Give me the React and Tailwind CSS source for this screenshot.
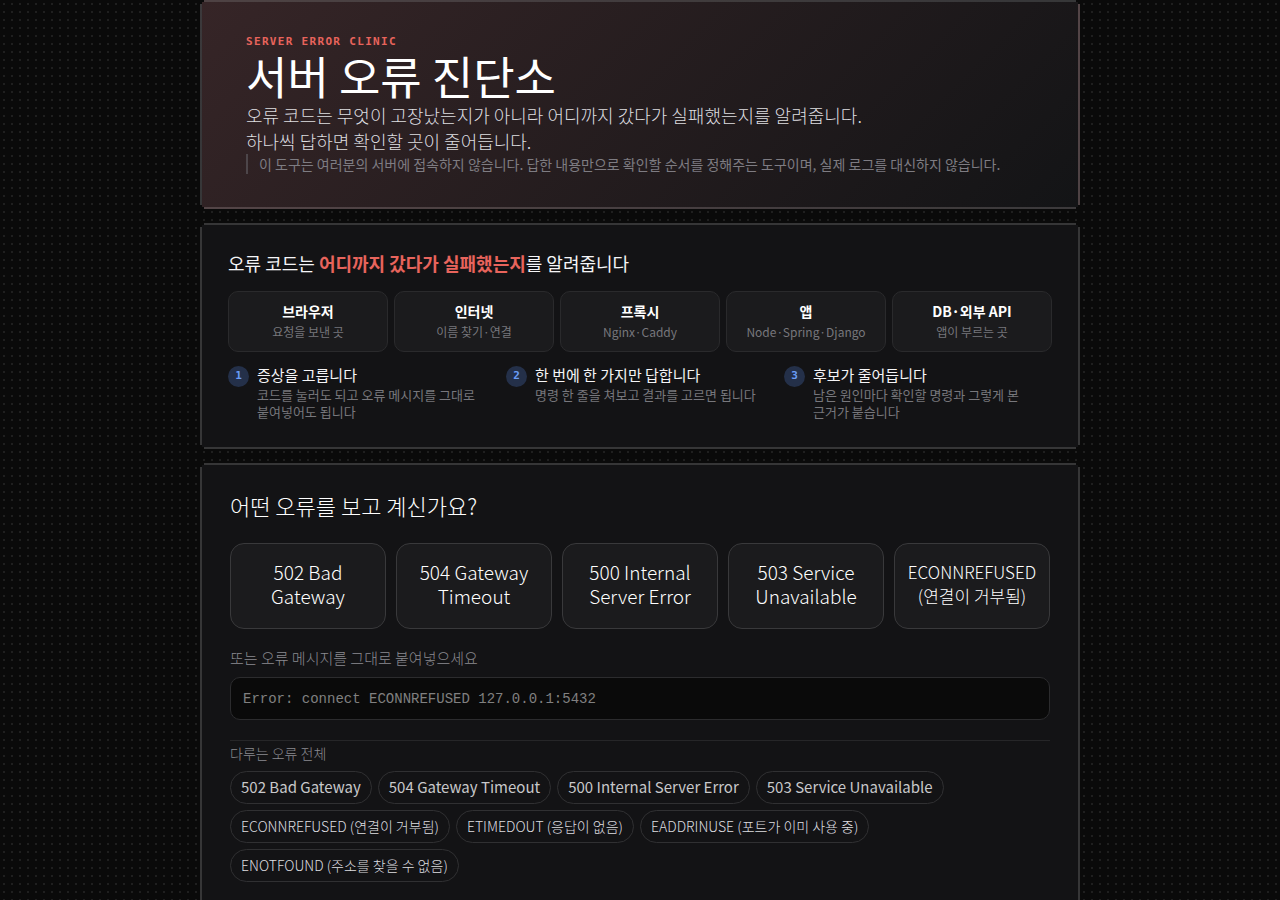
import React from 'react';

const notch =
  '[clip-path:polygon(4px_0,calc(100%_-_4px)_0,calc(100%_-_4px)_2px,calc(100%_-_2px)_2px,calc(100%_-_2px)_4px,100%_4px,100%_calc(100%_-_4px),calc(100%_-_2px)_calc(100%_-_4px),calc(100%_-_2px)_calc(100%_-_2px),calc(100%_-_4px)_calc(100%_-_2px),calc(100%_-_4px)_100%,4px_100%,4px_calc(100%_-_2px),2px_calc(100%_-_2px),2px_calc(100%_-_4px),0_calc(100%_-_4px),0_4px,2px_4px,2px_2px,4px_2px)]';

const hops = [
  { name: '브라우저', desc: '요청을 보낸 곳' },
  { name: '인터넷', desc: '이름 찾기·연결' },
  { name: '프록시', desc: 'Nginx·Caddy' },
  { name: '앱', desc: 'Node·Spring·Django' },
  { name: 'DB·외부 API', desc: '앱이 부르는 곳' },
];

const steps = [
  { title: '증상을 고릅니다', desc: '코드를 눌러도 되고 오류 메시지를 그대로 붙여넣어도 됩니다' },
  { title: '한 번에 한 가지만 답합니다', desc: '명령 한 줄을 쳐보고 결과를 고르면 됩니다' },
  { title: '후보가 줄어듭니다', desc: '남은 원인마다 확인할 명령과 그렇게 본 근거가 붙습니다' },
];

const errors = [
  { label: '502 Bad Gateway' },
  { label: '504 Gateway Timeout' },
  { label: '500 Internal Server Error' },
  { label: '503 Service Unavailable' },
  { label: 'ECONNREFUSED (연결이 거부됨)', errno: true },
  { label: 'ETIMEDOUT (응답이 없음)', errno: true },
  { label: 'EADDRINUSE (포트가 이미 사용 중)', errno: true },
  { label: 'ENOTFOUND (주소를 찾을 수 없음)', errno: true },
];

function Hero() {
  return (
    <header
      className={`${notch} border-2 border-white/15 bg-[#131416] bg-[linear-gradient(135deg,#362527_0%,#131416_100%)] px-11 pt-8 pb-[33px]`}
    >
      <p className="font-['DejaVu_Sans_Mono',monospace] text-[11px] leading-[15px] font-bold tracking-[0.12em] text-[#e8645c]">
        SERVER ERROR CLINIC
      </p>
      <h1 className="text-[45px] leading-[53px] font-normal text-white">서버 오류 진단소</h1>
      <p className="text-[18px] leading-[26px] text-[#dedee0]">
        오류 코드는 무엇이 고장났는지가 아니라 어디까지 갔다가 실패했는지를 알려줍니다.
        <br />
        하나씩 답하면 확인할 곳이 줄어듭니다.
      </p>
      <p className="border-l-2 border-[#4d464a] pl-[11px] text-[14px] leading-[20px] font-normal text-[#7e7c82]">
        이 도구는 여러분의 서버에 접속하지 않습니다. 답한 내용만으로 확인할 순서를 정해주는 도구이며, 실제 로그를 대신하지
        않습니다.
      </p>
    </header>
  );
}

function HowItWorks() {
  return (
    <section className={`${notch} border-2 border-white/15 bg-[#131315] p-[26px]`}>
      <h2 className="text-[18px] leading-[24px] font-normal text-[#f5f5f7]">
        오류 코드는 <strong className="font-bold text-[#e8645c]">어디까지 갔다가 실패했는지</strong>를 알려줍니다
      </h2>
      <ul className="mt-4 grid grid-cols-5 gap-1.5">
        {hops.map((hop) => (
          <li
            key={hop.name}
            className="rounded-[10px] border border-[#2a2a2c] bg-[#1b1b1d] px-2 py-[9px] text-center"
          >
            <div className="text-[14px] leading-[20px] font-bold text-white">{hop.name}</div>
            <div className="text-[12px] leading-[21px] font-normal text-[#77777c]">{hop.desc}</div>
          </li>
        ))}
      </ul>
      <ol className="mt-[14px] grid grid-cols-3 gap-[10px]">
        {steps.map((step, i) => (
          <li key={step.title} className="flex items-start gap-2">
            <span className="flex size-[21px] shrink-0 items-center justify-center rounded-full bg-[#243049] font-['DejaVu_Sans_Mono',monospace] text-[11px] font-bold text-[#6a9cf5]">
              {i + 1}
            </span>
            <div className="font-normal">
              <div className="text-[15px] leading-[18px] text-[#f5f5f7]">{step.title}</div>
              <div className="mt-0.5 mb-px text-[13px] leading-[17px] break-keep text-[#77777c]">{step.desc}</div>
            </div>
          </li>
        ))}
      </ol>
    </section>
  );
}

function Picker() {
  return (
    <section className={`${notch} border-2 border-white/15 bg-[#131315] p-7`}>
      <h2 className="text-[22px] leading-[24px] text-white">어떤 오류를 보고 계신가요?</h2>
      <div className="mt-[26px] grid grid-cols-5 gap-[10px]">
        {errors.slice(0, 5).map(({ label, errno }) => (
          <button
            key={label}
            type="button"
            className={`min-h-[86px] rounded-[14px] border border-[#39393b] bg-[#1b1b1d] px-2 pb-1 leading-[24px] break-keep text-white ${errno ? 'text-[17px]' : 'text-[19px]'}`}
          >
            {label}
          </button>
        ))}
      </div>
      <label htmlFor="message" className="mt-[18px] block text-[15px] leading-[22px] text-[#8a8a90]">
        또는 오류 메시지를 그대로 붙여넣으세요
      </label>
      <input
        id="message"
        type="text"
        placeholder="Error: connect ECONNREFUSED 127.0.0.1:5432"
        className="mt-2 block h-[43px] w-full rounded-[10px] border border-[#2c2c2e] bg-[#0a0a0a] px-3 font-['Liberation_Mono',monospace] text-[14px] font-normal text-white placeholder:text-[#808080]"
      />
      <div className="mt-5 border-t border-[#262628]">
        <h3 className="text-[14px] leading-[24px] text-[#8a8a90]">다루는 오류 전체</h3>
        <div className="mt-1.5 flex flex-wrap gap-1.5">
          {errors.map(({ label, errno }) => (
            <button
              key={label}
              type="button"
              className={`h-[33px] rounded-full border border-[#303032] px-[10px] ${errno ? 'text-[14px] text-[#dedee0]' : 'text-[15px] font-normal text-[#c8c8ca]'}`}
            >
              {label}
            </button>
          ))}
        </div>
      </div>
    </section>
  );
}

export default function App() {
  return (
    <div className="min-h-screen bg-[#0a0a0a] bg-[radial-gradient(circle,#1f1f1f_1px,transparent_1px)] bg-[size:8px_8px] font-['Noto_Sans_CJK_KR',sans-serif] font-light">
      <main className="mx-auto flex max-w-[880px] flex-col gap-[14px]">
        <Hero />
        <HowItWorks />
        <Picker />
      </main>
    </div>
  );
}
